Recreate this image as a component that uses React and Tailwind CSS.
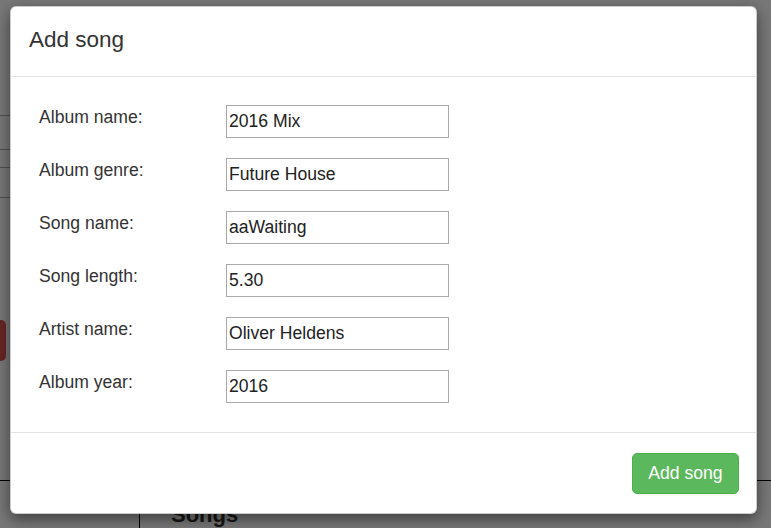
import React from "react";

const rows = [
  ["Album name:", "2016 Mix"],
  ["Album genre:", "Future House"],
  ["Song name:", "aaWaiting"],
  ["Song length:", "5.30"],
  ["Artist name:", "Oliver Heldens"],
  ["Album year:", "2016"],
];

export default function App() {
  return (
    <div
      className="relative w-[771px] h-[528px] overflow-hidden bg-white text-[#333]"
      style={{ fontFamily: '"Liberation Sans", Arial, Helvetica, sans-serif' }}
    >
      {/* background page */}
      <div className="flex flex-col">
        <div className="h-[116px] w-[139px] border-b border-[#aaa]" />
        <div className="h-[34px] w-[139px] border-b border-[#aaa]" />
        <div className="h-[18px] w-[139px] border-b border-[#aaa]" />
        <div className="h-[30px] w-[139px] border-b border-[#aaa]" />
        <div className="mt-[122px] ml-[-74px] h-[41px] w-[80px] rounded-[5px] bg-[#d9534f]" />
        <div className="mt-[119px] border-t border-black flex h-[48px]">
          <div className="w-[140px] border-r border-black" />
          <h3 className="pl-[31px] pt-[22px] text-[22px] leading-[1.1] font-bold text-[#333]">
            Songs
          </h3>
        </div>
      </div>

      {/* backdrop */}
      <div className="absolute inset-0 bg-black/[0.53]" />

      {/* modal */}
      <div className="absolute left-[10px] top-[6px] w-[747px] bg-white rounded-[6px] border border-black/20 shadow-[0_5px_15px_rgba(0,0,0,0.5)]">
        <div className="h-[70px] pt-[20px] pl-[18px] border-b border-[#e5e5e5]">
          <h4 className="text-[22.5px] leading-[26px] font-normal text-[#333]">Add song</h4>
        </div>
        <div className="pt-[28px] pb-[29px] pl-[28px] flex flex-col gap-[20px]">
          {rows.map(([label, value]) => (
            <div key={label} className="flex items-start">
              <label className="w-[187px] text-[17.6px] leading-[24px] text-[#333]">{label}</label>
              <input
                readOnly
                value={value}
                className="w-[223px] h-[33px] border border-[#a9a9a9] px-[2px] text-[17.6px] text-[#222] bg-white outline-none"
              />
            </div>
          ))}
        </div>
        <div className="border-t border-[#e5e5e5] pt-[20px] pb-[19px] pr-[17px] flex justify-end">
          <button className="w-[107px] h-[41px] rounded-[5px] bg-[#5cb85c] border border-[#4cae4c] text-white text-[17.6px]">
            Add song
          </button>
        </div>
      </div>
    </div>
  );
}
